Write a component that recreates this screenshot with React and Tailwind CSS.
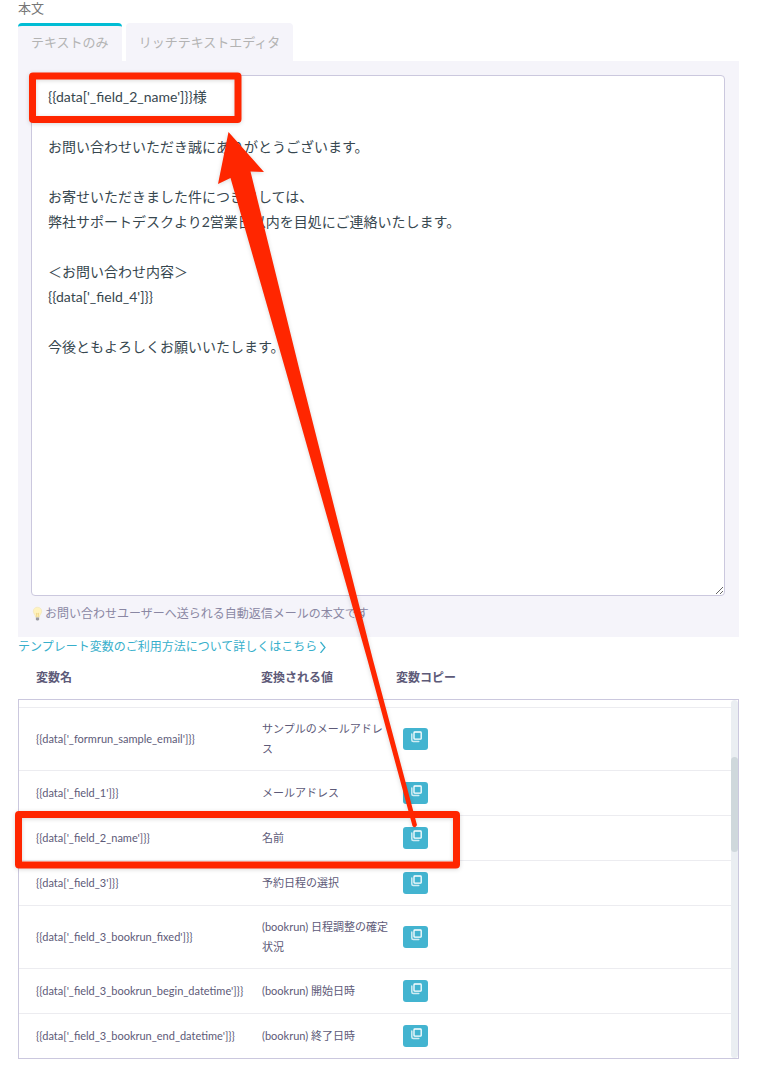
import { useState } from "react";

const variables = [
  { name: "{{data['_formrun_sample_email']}}", value: "サンプルのメールアドレス" },
  { name: "{{data['_field_1']}}", value: "メールアドレス" },
  { name: "{{data['_field_2_name']}}", value: "名前" },
  { name: "{{data['_field_3']}}", value: "予約日程の選択" },
  { name: "{{data['_field_3_bookrun_fixed']}}", value: "(bookrun) 日程調整の確定状況" },
  { name: "{{data['_field_3_bookrun_begin_datetime']}}", value: "(bookrun) 開始日時" },
  { name: "{{data['_field_3_bookrun_end_datetime']}}", value: "(bookrun) 終了日時" },
];

const defaultBody = `{{data['_field_2_name']}}様

お問い合わせいただき誠にありがとうございます。

お寄せいただきました件につきましては、
弊社サポートデスクより2営業日以内を目処にご連絡いたします。

＜お問い合わせ内容＞
{{data['_field_4']}}

今後ともよろしくお願いいたします。`;

const CopyIcon = () => (
  <svg className="w-3 h-3" viewBox="0 0 12 12" fill="none" stroke="currentColor" aria-hidden="true">
    <rect x="4" y="1" width="7.2" height="7.2" rx="0.8" strokeWidth="1.3" />
    <path d="M1.8 3V9Q1.8 10.5 3.3 10.5H8.8" strokeWidth="1.5" strokeLinecap="round" opacity="0.75" />
  </svg>
);

const BulbIcon = () => (
  <svg className="w-3 h-4 shrink-0" viewBox="0 0 12 16" aria-hidden="true">
    <path d="M6.5 1.2C4 1.2 2.3 3 2.3 5.2C2.3 7.6 4.4 8.6 4.6 11.2H8.4C8.6 8.6 10.7 7.6 10.7 5.2C10.7 3 9 1.2 6.5 1.2Z" fill="#fff3bf" stroke="#f0e4b4" strokeWidth="0.6" />
    <path d="M5.8 11L5.4 7.2L6.5 7.8L7.6 7.2L7.2 11" fill="none" stroke="#ecd07c" strokeWidth="0.7" />
    <path d="M4.9 11.4H8.1V13.4L7.3 14.6H5.7L4.9 13.4Z" fill="#9a9aa0" />
  </svg>
);

// Marks where the copied variable is pasted
const Annotation = () => (
  <svg
    className="absolute top-0 left-0 pointer-events-none drop-shadow-sm"
    width="757"
    height="1069"
    viewBox="0 0 757 1069"
    fill="none"
    aria-hidden="true"
  >
    <rect x="32.5" y="76" width="205.5" height="43.5" rx="0.5" stroke="#ff2600" strokeWidth="7" strokeLinejoin="round" />
    <rect x="18.5" y="814.5" width="438" height="50.5" rx="0.5" stroke="#ff2600" strokeWidth="7" strokeLinejoin="round" />
    <path d="M228.5 132L264 172L250.5 171.5L299.5 370L373 660L417 825Q415 829 412.5 826L367.5 660L285.5 370L230.5 178L218 184Z" fill="#ff2600" />
  </svg>
);

const App = () => {
  const [tab, setTab] = useState("text");
  const [body, setBody] = useState(defaultBody);

  const handleCopy = (name) => {
    navigator.clipboard?.writeText(name);
  };

  return (
    <div className="relative bg-white px-[18px] pb-[10px] font-['Lato','Noto_Sans_CJK_JP',sans-serif] text-[#5d5a78]">
      <label htmlFor="body" className="block h-[23px] text-[13px] leading-4 text-[#777777]">
        本文
      </label>

      {/* Tabs */}
      <div className="flex gap-1 h-[38px] text-[13px] text-[#b3b3b3]">
        <button
          type="button"
          onClick={() => setTab("text")}
          className={`px-[13px] pb-[2px] rounded-t border-t-3 bg-[#f5f4fa] ${tab === "text" ? "border-[#00bcd4]" : "border-[#f5f4fa]"}`}
        >
          テキストのみ
        </button>
        <button
          type="button"
          onClick={() => setTab("rich")}
          className={`px-[13px] pb-[2px] rounded-t border-t-3 bg-[#f5f4fa] ${tab === "rich" ? "border-[#00bcd4]" : "border-[#f5f4fa]"}`}
        >
          リッチテキストエディタ
        </button>
      </div>

      {/* Mail body */}
      <div className="bg-[#f5f4fa] pl-[13px] pr-[14px] pt-[14px] pb-[13px]">
        <textarea
          id="body"
          value={body}
          onChange={(e) => setBody(e.target.value)}
          className="block w-full h-[521px] px-4 py-2 bg-white border border-[#cbc8de] rounded resize-y outline-none text-[14px] leading-[25px] text-[#37474f]"
        />
        <p className="mt-2 flex items-center gap-[2px] text-[12px] leading-5 text-[#8a87a3]">
          <BulbIcon />
          お問い合わせユーザーへ送られる自動返信メールの本文です
        </p>
      </div>

      <a href="#" className="flex items-center gap-[2px] text-[12px] leading-5 text-[#37afcb]">
        テンプレート変数のご利用方法について詳しくはこちら
        <svg className="w-2 h-3" viewBox="0 0 8 12" fill="none" stroke="currentColor" strokeWidth="1.2" aria-hidden="true">
          <path d="M1.5 1L6 6.5L1.5 12" />
        </svg>
      </a>

      {/* Variables */}
      <table className="w-full table-fixed text-left text-[12px]">
        <thead>
          <tr className="h-[42px]">
            <th className="w-[243px] pl-[18px] font-bold">変数名</th>
            <th className="w-[135px] font-bold">変換される値</th>
            <th className="font-bold">変数コピー</th>
          </tr>
        </thead>
      </table>
      <div className="flex border border-[#cbc8de]">
        <div className="flex-1 pt-[7px]">
          <table className="w-full table-fixed text-left text-[11px] leading-5">
            <tbody>
              {variables.map((item) => (
                <tr key={item.name} className="border-t border-[#ececf0]">
                  <td className="w-[243px] py-[11px] pl-[17px] whitespace-nowrap">{item.name}</td>
                  <td className="w-[134px] py-[11px] pr-[5px]">{item.value}</td>
                  <td className="py-[11px] pl-[7px]">
                    <button
                      type="button"
                      aria-label={`${item.name} をコピー`}
                      onClick={() => handleCopy(item.name)}
                      className="flex justify-center w-[25px] h-[22px] pt-[3px] rounded-[3px] bg-[#43b4d0] text-white"
                    >
                      <CopyIcon />
                    </button>
                  </td>
                </tr>
              ))}
            </tbody>
          </table>
        </div>
        {/* Scrollbar */}
        <div className="w-[7px] pt-[57px] rounded-full bg-[#eaeef2]">
          <div className="h-[95px] rounded-full bg-[#cfd8dc]"></div>
        </div>
      </div>

      <Annotation />
    </div>
  );
};

export default App;
